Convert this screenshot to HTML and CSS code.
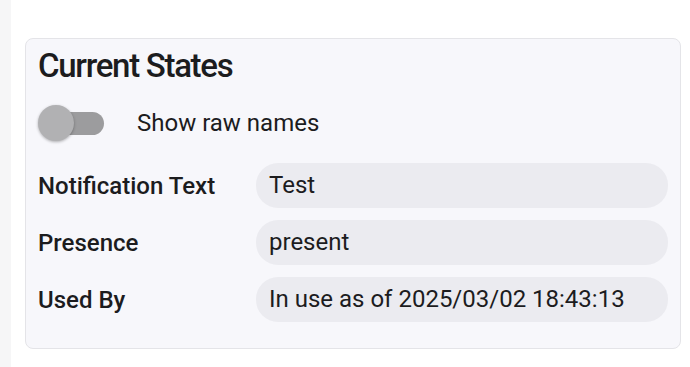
FILE: index.html
```html
<!DOCTYPE html>
<html lang="en">

<head>
    <meta charset="UTF-8">
    <meta name="viewport" content="width=device-width, initial-scale=1.0">
    <title>Current States</title>
    <link rel="stylesheet" href="styles.css">
</head>

<body>
    <div class="page">
        <div class="side-strip"></div>

        <div class="main-content">
            <div class="card">
                <h2>Current States</h2>

                <div class="toggle-row">
                    <div class="switch">
                        <div class="switch-track"></div>
                        <div class="switch-thumb"></div>
                    </div>
                    <span class="toggle-label">Show raw names</span>
                </div>

                <div class="state-row">
                    <div class="state-name">Notification Text</div>
                    <div class="state-value">Test</div>
                </div>
                <div class="state-row">
                    <div class="state-name">Presence</div>
                    <div class="state-value">present</div>
                </div>
                <div class="state-row">
                    <div class="state-name">Used By</div>
                    <div class="state-value">In use as of 2025/03/02 18:43:13</div>
                </div>
            </div>
        </div>
    </div>
</body>

</html>
```

FILE: styles.css
```css
body {
    font-family: Roboto, "Noto Sans", sans-serif;
    margin: 0;
    padding: 0;
    background-color: #ffffff;
    color: #1c1c1e;
}

.page {
    display: flex;
    min-height: 367px;
}

.side-strip {
    width: 11px;
    background-color: #f6f6f7;
    flex-shrink: 0;
}

.main-content {
    flex: 1;
    padding: 38px 9px 0 14px;
}

.card {
    background-color: #f7f7fb;
    border: 1px solid #e4e4e8;
    border-radius: 8px;
    padding: 9px 12px 26px 12px;
}

.card h2 {
    margin: 0;
    font-size: 33px;
    font-weight: 500;
    line-height: 36px;
    letter-spacing: -1.3px;
}

.toggle-row {
    display: flex;
    align-items: center;
    margin-top: 21px;
    height: 36px;
}

.switch {
    position: relative;
    width: 66px;
    height: 36px;
    margin-right: 33px;
}

.switch-track {
    position: absolute;
    left: 14px;
    right: 0;
    top: 7px;
    height: 23px;
    border-radius: 12px;
    background-color: #9c9c9e;
}

.switch-thumb {
    position: absolute;
    left: 0;
    top: 0;
    width: 36px;
    height: 36px;
    border-radius: 50%;
    background-color: #b1b1b3;
    box-shadow: 0 1px 3px rgba(0, 0, 0, 0.3);
}

.toggle-label {
    font-size: 24px;
}

.state-row {
    display: flex;
    align-items: center;
    margin-top: 12px;
}

.toggle-row + .state-row {
    margin-top: 22px;
}

.state-name {
    width: 218px;
    flex-shrink: 0;
    font-size: 24px;
    font-weight: 500;
}

.state-value {
    flex: 1;
    background-color: #ebebf0;
    border-radius: 22px;
    padding: 0 13px;
    height: 45px;
    line-height: 45px;
    font-size: 24px;
}
```
